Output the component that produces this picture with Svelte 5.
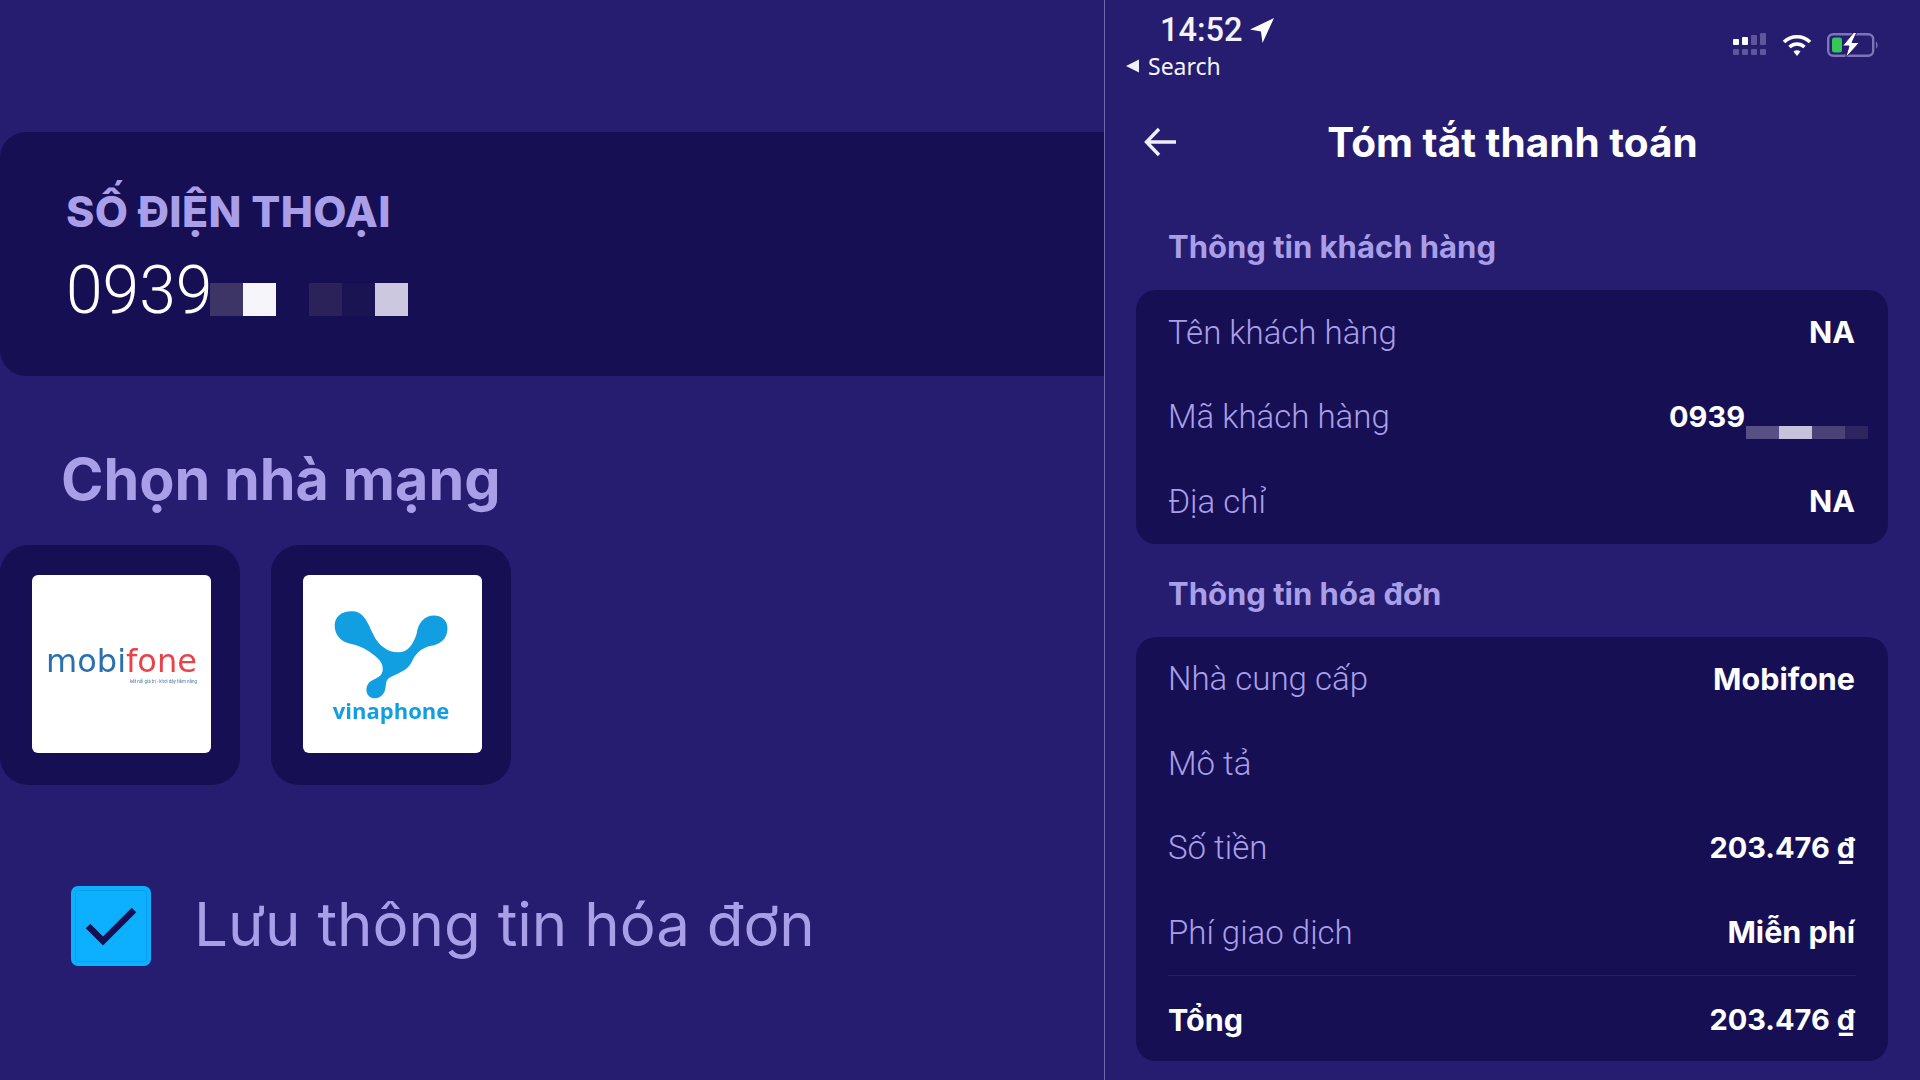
<script lang="ts">
  const bigCells = ["#3e3567", "#f6f5fa", "transparent", "#2a2259", "#1b1452", "#cbc8e0"];
  const smallCells = ["#575084", "#c5c2dc", "#4a4378", "#2d2560"];

  const customer = [
    { label: "Tên khách hàng", value: "NA" },
    { label: "Mã khách hàng", value: "0939", masked: true },
    { label: "Địa chỉ", value: "NA" },
  ];
  const invoice = [
    { label: "Nhà cung cấp", value: "Mobifone" },
    { label: "Mô tả", value: "" },
    { label: "Số tiền", value: "203.476 ₫", amount: true },
    { label: "Phí giao dịch", value: "Miễn phí" },
  ];
</script>

<div class="page">
  <section class="left">
    <div class="phone-card">
      <div class="phone-label">SỐ ĐIỆN THOẠI</div>
      <div class="phone-number">
        <span>0939</span>
        <div class="cells big">
          {#each bigCells as c}
            <i style:background={c}></i>
          {/each}
        </div>
      </div>
    </div>

    <h2>Chọn nhà mạng</h2>

    <div class="carriers">
      <div class="tile">
        <div class="logo mobi">
          <div class="mobi-word"><span class="blue">mobi</span><span class="red">fone</span></div>
          <div class="mobi-tag">kết nối giá trị - khơi dậy tiềm năng</div>
        </div>
      </div>
      <div class="tile">
        <div class="logo vina">
          <svg width="114" height="90" viewBox="133 120 341 266">
            <path
              fill="#129fe2"
              d="M135 165C135 135 160 120 190 122C225 125 235 160 250 190C265 225 295 245 325 245C355 245 370 220 380 190C385 155 405 135 432 135C460 135 475 155 472 180C470 205 450 222 425 225C395 230 375 250 365 275C355 295 335 305 300 320C285 328 290 345 285 360C280 375 265 385 250 382C230 378 225 355 235 340C245 325 265 325 275 310C285 290 275 270 255 255C235 238 210 225 185 220C155 215 135 195 135 165Z"
            />
          </svg>
          <div class="vina-word">vinaphone</div>
        </div>
      </div>
    </div>

    <div class="save">
      <div class="checkbox">
        <svg width="54" height="42" viewBox="0 0 54 42">
          <path d="M4 21L19 36L50 5" fill="none" stroke="#161052" stroke-width="6.5" />
        </svg>
      </div>
      <span>Lưu thông tin hóa đơn</span>
    </div>
  </section>

  <section class="right">
    <div class="status">
      <div class="status-left">
        <div class="time">
          14:52
          <svg width="24" height="25" viewBox="0 0 23 24">
            <path d="M23 0L0 11L10.500 13L12 24Z" fill="#fff" />
          </svg>
        </div>
        <div class="search">
          <svg width="13" height="14" viewBox="0 0 14 14"><path d="M14 0V14L0 7Z" fill="#f1f0fa" /></svg>
          Search
        </div>
      </div>
      <div class="status-right">
        <svg width="34" height="24" viewBox="0 0 34 24">
          <g fill="#fff">
            <rect x="0" y="6" width="6" height="6" rx="1" />
            <rect x="9" y="4" width="6" height="8" rx="1" />
          </g>
          <g fill="#5f5799">
            <rect x="18" y="2" width="6" height="10" rx="1" />
            <rect x="27" y="0" width="6" height="12" rx="1" />
            <rect x="0" y="16" width="6" height="6" rx="1" />
            <rect x="9" y="16" width="6" height="6" rx="1" />
            <rect x="18" y="16" width="6" height="6" rx="1" />
            <rect x="27" y="16" width="6" height="6" rx="1" />
          </g>
        </svg>
        <svg width="30" height="24" viewBox="0 0 30 24">
          <g fill="none" stroke="#fff" stroke-width="3.6">
            <path d="M2 9C9 2 21 2 28 9" />
            <path d="M7.5 14C12 10 18 10 22.500 14" />
          </g>
          <path d="M11.500 18.500C13.500 16.800 16.500 16.800 18.500 18.500L15 23Z" fill="#fff" />
        </svg>
        <svg width="52" height="24" viewBox="0 0 52 24">
          <rect x="1.200" y="1.200" width="45" height="21.600" rx="5" fill="none" stroke="#7d75b5" stroke-width="2.400" />
          <rect x="5" y="4.500" width="10" height="15" rx="2.500" fill="#34c759" />
          <path d="M49 8.500C51 9.500 51 14.500 49 15.500Z" fill="#7d75b5" />
          <path d="M27 -1L15.500 13H22L18.500 25L32.500 9.500H25L30 -1Z" fill="#fff" stroke="#271d70" stroke-width="1" />
        </svg>
      </div>
    </div>

    <header>
      <svg class="back" width="34" height="30" viewBox="0 0 34 30">
        <path d="M32 15H3M15 2L2.500 15L15 28" fill="none" stroke="#f1f0fa" stroke-width="3.400" />
      </svg>
      <h1>Tóm tắt thanh toán</h1>
    </header>

    <h3>Thông tin khách hàng</h3>
    <div class="panel">
      {#each customer as row}
        <div class="row">
          <span class="label">{row.label}</span>
          <div class="value-wrap">
            <b class:amount={row.masked}>{row.value}</b>
            {#if row.masked}
              <div class="cells small">
                {#each smallCells as c}
                  <i style:background={c}></i>
                {/each}
              </div>
            {/if}
          </div>
        </div>
      {/each}
    </div>

    <h3 class="second">Thông tin hóa đơn</h3>
    <div class="panel">
      {#each invoice as row}
        <div class="row">
          <span class="label">{row.label}</span>
          <b class:amount={row.amount}>{row.value}</b>
        </div>
      {/each}
      <div class="rule"></div>
      <div class="row total">
        <b>Tổng</b>
        <b class="amount">203.476 ₫</b>
      </div>
    </div>
  </section>
</div>

<style>
  :global(body) {
    margin: 0;
    background: #271d70;
  }
  .page {
    display: grid;
    grid-template-columns: 1104px 1fr;
    width: 1920px;
    height: 1080px;
    overflow: hidden;
    background: #271d70;
    font-family: Roboto, "Liberation Sans", sans-serif;
    color: #a99fe8;
  }

  .left {
    padding-top: 132px;
  }
  .phone-card {
    box-sizing: border-box;
    height: 244px;
    padding: 55px 0 0 66px;
    background: #160f54;
    border-radius: 26px 0 0 26px;
  }
  .phone-label {
    font-family: Inter, sans-serif;
    font-size: 43px;
    line-height: 48px;
    font-weight: 800;
    letter-spacing: 0.3px;
  }
  .phone-number {
    display: flex;
    align-items: flex-start;
    margin-top: 18px;
    color: #fff;
    font-size: 66px;
    line-height: 76px;
    font-weight: 300;
  }
  .phone-number span {
    width: 144px;
  }
  .cells {
    display: flex;
  }
  .cells.big {
    margin-top: 30px;
  }
  .cells.big i {
    width: 33px;
    height: 33px;
  }
  .cells.small i {
    flex: none;
    width: 33px;
    height: 13px;
  }
  .cells.small i:last-child {
    width: 23px;
  }

  h2 {
    margin: 71px 0 0 61px;
    height: 66px;
    font-family: Inter, sans-serif;
    font-size: 57.500px;
    line-height: 65px;
    font-weight: 700;
  }
  .carriers {
    display: flex;
    gap: 31px;
    margin-top: 32px;
  }
  .tile {
    box-sizing: border-box;
    width: 240px;
    height: 240px;
    padding: 30px 29px 30px 32px;
    background: #160f54;
    border-radius: 28px;
  }
  .logo {
    box-sizing: border-box;
    height: 178px;
    background: #fff;
    border-radius: 6px;
    display: flex;
    flex-direction: column;
    align-items: center;
  }
  .mobi {
    padding-top: 69px;
  }
  .mobi-word {
    font-family: "DejaVu Sans", sans-serif;
    font-size: 32px;
    line-height: 34px;
    filter: blur(0.5px);
  }
  .blue {
    color: #2a6fb0;
  }
  .red {
    color: #e8434b;
  }
  .mobi-tag {
    align-self: flex-end;
    margin: 0 14px 0 0;
    font-size: 4.5px;
    line-height: 7px;
    color: #4d7bab;
    filter: blur(0.3px);
  }
  .vina {
    padding: 35px 3px 0 0;
  }
  .vina svg {
    display: block;
    filter: blur(0.4px);
  }
  .vina-word {
    margin-top: -3px;
    color: #129fe2;
    font-family: "Open Sans", sans-serif;
    font-size: 22px;
    line-height: 27px;
    font-weight: 700;
    filter: blur(0.4px);
  }

  .save {
    display: flex;
    align-items: center;
    gap: 43px;
    margin: 101px 0 0 71px;
  }
  .checkbox {
    box-sizing: border-box;
    width: 80px;
    height: 80px;
    display: flex;
    align-items: center;
    justify-content: center;
    background: #0cb0ff;
    border-radius: 7px;
    outline: 1px solid #0a9fe8;
    outline-offset: -5px;
  }
  .save span {
    position: relative;
    top: -2px;
    font-family: Inter, sans-serif;
    font-size: 60px;
    line-height: 72px;
    font-weight: 400;
  }

  .right {
    border-left: 1px solid #6f67ad;
    min-width: 0;
  }
  .status {
    box-sizing: border-box;
    height: 85px;
    display: flex;
    justify-content: space-between;
    padding: 12px 41px 0 21px;
    color: #f4f3fb;
  }
  .time {
    display: flex;
    align-items: center;
    gap: 8px;
    padding-left: 34px;
    font-size: 32.500px;
    line-height: 36px;
    font-weight: 500;
  }
  .search {
    display: flex;
    align-items: center;
    gap: 9px;
    margin-top: 4px;
    font-size: 23px;
    line-height: 28px;
    font-family: "Noto Sans", sans-serif;
  }
  .status-right {
    display: flex;
    align-items: flex-start;
    gap: 15px;
    padding-top: 21px;
  }

  header {
    position: relative;
    height: 114px;
    display: flex;
    align-items: center;
    justify-content: center;
  }
  .back {
    position: absolute;
    left: 39px;
    top: 42px;
  }
  h1 {
    margin: 0;
    color: #fff;
    font-family: Inter, sans-serif;
    font-size: 40.500px;
    font-weight: 700;
  }
  h3 {
    margin: 0;
    box-sizing: border-box;
    height: 91px;
    padding: 30px 0 0 63px;
    font-family: Inter, sans-serif;
    font-size: 31px;
    line-height: 36px;
    font-weight: 700;
  }
  h3.second {
    height: 93px;
    padding-top: 32px;
  }
  .panel {
    margin: 0 32px 0 31px;
    background: #160f54;
    border-radius: 20px;
  }
  .row {
    box-sizing: border-box;
    height: 84.500px;
    display: flex;
    align-items: center;
    justify-content: space-between;
    padding: 0 33px 0 32px;
  }
  .label {
    font-size: 33px;
    font-weight: 300;
  }
  .row b {
    color: #fff;
    font-family: Inter, sans-serif;
    font-size: 30.500px;
    line-height: 34px;
    font-weight: 700;
  }
  .row b.amount {
    font-size: 29px;
  }
  .value-wrap {
    display: flex;
    align-items: flex-end;
    gap: 1px;
  }
  .cells.small {
    margin: 0 -13px -5px 0;
  }
  .rule {
    height: 1px;
    margin: 0 32px;
    background: #271d70;
  }
  .row.total {
    height: 85px;
    padding-top: 3px;
  }
</style>
